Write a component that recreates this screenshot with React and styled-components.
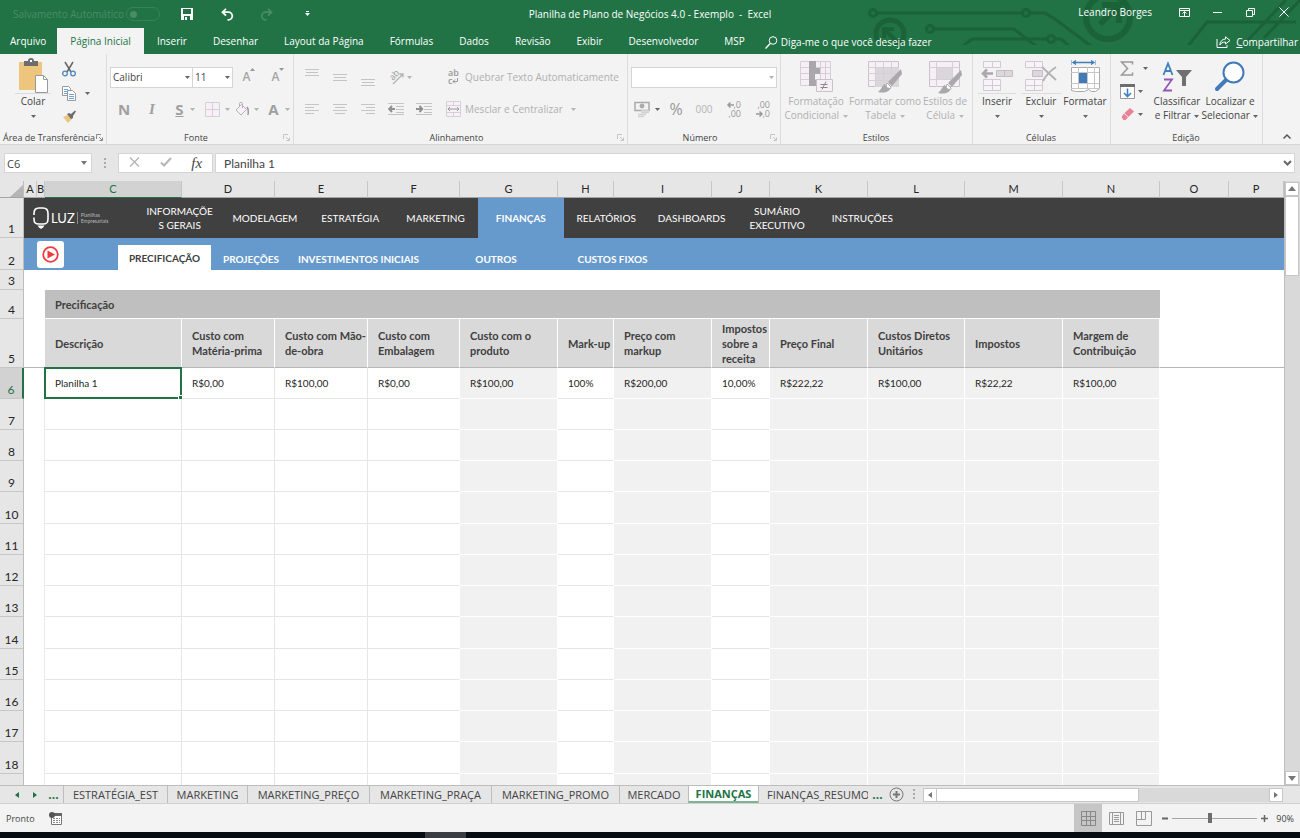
import React from "react";
import styled, { createGlobalStyle, css } from "styled-components";

const ui = `"Open Sans", "Noto Sans", sans-serif`;
const calibri = `Lato, "Open Sans", sans-serif`;

function App() {
    return (
        <>
            <Global />
            <Window>
                <TitleBar />
                <Ribbon />
                <FormulaBar />
                <Workbook />
                <SheetBar />
                <StatusBar />
                <Taskbar>
                    <TaskbarItem />
                </Taskbar>
            </Window>
        </>
    );
}
export default App;

/* ---------- title bar + menu ---------- */

const MENU = [
    "Inserir",
    "Desenhar",
    "Layout da Página",
    "Fórmulas",
    "Dados",
    "Revisão",
    "Exibir",
    "Desenvolvedor",
    "MSP",
];

function TitleBar() {
    return (
        <Header>
            <Circuit />
            <TitleRow>
                <QuickAccess>
                    <AutoSave>
                        Salvamento Automático
                        <Toggle type="checkbox" disabled />
                    </AutoSave>
                    <QuickBtn aria-label="Salvar">
                        <svg width="12" height="12" viewBox="0 0 12 12">
                            <path d="M0 0h12v12H0z" fill="#fff" />
                            <path d="M2 1h8v5H2zM3 8h6v4H3z" fill="#217346" />
                            <path d="M4 9h2v3H4z" fill="#fff" />
                        </svg>
                    </QuickBtn>
                    <QuickBtn aria-label="Desfazer">
                        <UndoIcon color="#fff" />
                    </QuickBtn>
                    <QuickBtn aria-label="Refazer" $flip>
                        <UndoIcon color="#4a8c67" />
                    </QuickBtn>
                    <QuickBtn aria-label="Personalizar">
                        <svg width="5" height="6" viewBox="0 0 5 6">
                            <path d="M1 0h3v1H1zM0 2h5L2.500 5z" fill="#fff" />
                        </svg>
                    </QuickBtn>
                </QuickAccess>
                <DocTitle>Planilha de Plano de Negócios 4.0 - Exemplo &nbsp;-&nbsp; Excel</DocTitle>
                <WindowControls>
                    <User>Leandro Borges</User>
                    <WinBtn aria-label="Opções da faixa">
                        <svg width="11" height="9" viewBox="0 0 11 9" fill="none" stroke="#fff">
                            <path d="M.5.5h10v8H.5zM.5 2.500h10M5.500 8V4M3.500 5.500l2-2 2 2" />
                        </svg>
                    </WinBtn>
                    <WinBtn aria-label="Minimizar">
                        <svg width="9" height="9" viewBox="0 0 9 9" stroke="#fff">
                            <path d="M0 4.500h9" />
                        </svg>
                    </WinBtn>
                    <WinBtn aria-label="Restaurar">
                        <svg width="9" height="9" viewBox="0 0 9 9" fill="none" stroke="#fff">
                            <path d="M.5 2.500h6v6h-6zM2.500 2.500v-2h6v6h-2" />
                        </svg>
                    </WinBtn>
                    <WinBtn aria-label="Fechar">
                        <svg width="10" height="10" viewBox="0 0 10 10" stroke="#fff">
                            <path d="M.5.5l9 9M9.500.500l-9 9" />
                        </svg>
                    </WinBtn>
                </WindowControls>
            </TitleRow>
            <MenuRow>
                <MenuTab $first>Arquivo</MenuTab>
                <MenuTab $active>Página Inicial</MenuTab>
                {MENU.map((name) => (
                    <MenuTab key={name}>{name}</MenuTab>
                ))}
                <TellMe>
                    <svg width="13" height="13" viewBox="0 0 13 13" fill="none" stroke="#fff">
                        <circle cx="8" cy="4.500" r="3.800" />
                        <path d="M5.200 7.500L.5 12.500" strokeWidth="1.300" />
                    </svg>
                    Diga-me o que você deseja fazer
                </TellMe>
                <Share>
                    <svg width="15" height="12" viewBox="0 0 15 12" fill="none" stroke="#fff">
                        <path d="M1 3v8.500h10V9M9.500.800l4.500 3.700-4.500 3.500V6C6.500 6 5 7 3.800 9 4 5.500 6 3.200 9.500 3z" />
                    </svg>
                    <span>
                        <u>C</u>ompartilhar
                    </span>
                </Share>
            </MenuRow>
        </Header>
    );
}

function UndoIcon({ color }) {
    return (
        <svg width="13" height="13" viewBox="0 0 13 13" fill="none" stroke={color} strokeWidth="1.800">
            <path d="M5 .8L1.500 4.200 5 7.600M1.500 4.200H7.500a3.800 3.800 0 0 1 0 7.600H6.500" />
        </svg>
    );
}

function Circuit() {
    return (
        <CircuitSvg width="436" height="45" viewBox="864 0 436 45" fill="none" stroke="#1b6239" strokeWidth="3">
            <circle cx="873" cy="13" r="3.500" />
            <path d="M877 13h145" />
            <circle cx="1026" cy="13" r="3.500" />
            <path d="M1030 13h15l10 6 36 27" />
            <circle cx="890" cy="34" r="14" strokeWidth="5" />
            <path d="M884 38V29h10M884 29l14 14" strokeWidth="4" />
            <circle cx="930" cy="29" r="3.500" />
            <path d="M934 29h80l22 17" />
            <path d="M963 46l9-7h75" />
            <circle cx="1051" cy="39" r="3.500" />
            <path d="M1055 39h6l8 7" />
            <circle cx="1108" cy="17" r="22" strokeWidth="6" />
            <path d="M1102 5h17v18M1118 6l-18 18" strokeWidth="6" />
            <path d="M1188 46l19-24h89" />
            <path d="M1248 40l38-40M1264 38l36-38" />
        </CircuitSvg>
    );
}

/* ---------- ribbon ---------- */

const grey = "#b4b2b4";
const pale = "#d6cfd6";

function Caret({ color = "#666" }) {
    return (
        <svg width="5" height="3" viewBox="0 0 5 3">
            <path d="M0 0h5L2.500 3z" fill={color} />
        </svg>
    );
}

function Group({ name, width, launcher, dim, children }) {
    return (
        <GroupBox $w={width}>
            <GroupBody>{children}</GroupBody>
            <GroupName>
                <span>{name}</span>
                {launcher && (
                    <svg width="7" height="7" viewBox="0 0 7 7" fill="none" stroke={dim ? "#c4c4c4" : "#888"}>
                        <path d="M.5 5V.5H5M3 3l3 3M6.500 3.500v3h-3" />
                    </svg>
                )}
            </GroupName>
        </GroupBox>
    );
}

function Big({ width, icon, lines, dim, split }) {
    const color = dim ? "#b8b8b8" : "#666";
    return (
        <BigBtn $w={width} $dim={dim}>
            <BigIcon $line={split}>{icon}</BigIcon>
            <span>{lines[0]}</span>
            <span>
                {lines[1]} <Caret color={color} />
            </span>
        </BigBtn>
    );
}

function Lines({ y, xs }) {
    return (
        <svg width="14" height="20" viewBox="0 0 14 20" stroke="#c4c4c4">
            {xs.map(([a, b], i) => (
                <path key={i} d={`M${a} ${y + i * 3 + 0.5}H${b}`} />
            ))}
        </svg>
    );
}

function Indent({ left }) {
    return (
        <svg width="16" height="12" viewBox="0 0 16 12" stroke="#c4c4c4" fill="none">
            <path d="M0 .5h16M8 3.500h8M8 6.500h8M8 9.500h8M0 11.500h16" />
            <path
                d={left ? "M7 6H1.500M4 3L1.200 6 4 9" : "M0 6h5.500M3.500 3L6.200 6 3.500 9"}
                stroke="#909090"
                strokeWidth="2"
            />
        </svg>
    );
}

function Brush({ x, y }) {
    return (
        <g transform={`translate(${x} ${y})`}>
            <path d="M24 0L11 13l4 4L25 5z" fill="#aaa8aa" />
            <path d="M10 14l4 4c0 2-2 3-4 3-1-3-1-5 0-7z" fill="#fff" stroke="#aaa" />
            <path d="M8 15c-3 1-3 5-7 8 5 1 11 1 12-4-2 0-4-1-5-4z" fill="#aaa8aa" />
        </g>
    );
}

const pasteIcon = (
    <svg width="30" height="34" viewBox="0 0 30 34">
        <path d="M1 3h23v28H1z" fill="#edc57c" />
        <path d="M6 2h4a3 3 0 0 1 6 0h4v5H6z" fill="#6d6d6d" />
        <path d="M12 1h2v2h-2z" fill="#fff" />
        <path d="M17.500 16.500h8l4 4v13h-12z" fill="#fff" stroke="#999" />
        <path d="M25.500 16.500v4h4" fill="none" stroke="#999" />
    </svg>
);

const condIcon = (
    <svg width="34" height="33" viewBox="0 0 34 33">
        <path d="M1.500 1.500h30v24h-30z" fill="#f6f0f6" stroke={pale} />
        <path d="M1 7.500h31M1 13.500h31M1 19.500h31M21.500 1v25M26.500 1v25" stroke={pale} />
        <path d="M10 1h7v7h4v6h-5v6h1v6h-7z" fill="#a9a7a9" />
        <path d="M17.500 19.500h16v12h-16z" fill="#f6f0f6" stroke="#c9c3c9" />
        <path d="M21.500 24.500h7M21.500 27.500h7M27 21.500l-4 8" stroke="#8a8a8a" />
    </svg>
);

const tableIcon = (
    <svg width="36" height="33" viewBox="0 0 36 33">
        <path d="M1.500 1.500h30v25h-30z" fill="#f6f0f6" stroke="#c9c3c9" />
        <path d="M9 8h23v19H9z" fill="#dad6da" />
        <path d="M1 7.500h31M1 13.500h31M1 20.500h31M8.500 1v26M16.500 1v26M24.500 1v26" stroke={pale} />
        <Brush x={10} y={9} />
    </svg>
);

const cellIcon = (
    <svg width="34" height="34" viewBox="0 0 34 34">
        <path d="M1.500 1.500h30v25h-30z" fill="#f6f0f6" stroke="#c9c3c9" />
        <path d="M1 7.500h31M1 19.500h31M8.500 1v26M24.500 1v26" stroke={pale} />
        <path d="M9 8h15v11H9z" fill="#dad6da" />
        <Brush x={9} y={10} />
    </svg>
);

const insertIcon = (
    <svg width="32" height="32" viewBox="0 0 32 32" fill="#f8f3f8" stroke="#d3c9d3">
        <path d="M2.500 1.500h17v6h-17zM11.500 1v7M2.500 19.500h17v11h-17zM2 25.500h18M11.500 19v12" />
        <path d="M15.500 10.500h16v6h-16zM23.500 10v7" fill="#dcd7dc" stroke="#c4bec4" />
        <path d="M12 13.500H2M6 9.500l-4 4 4 4" fill="none" stroke="#aaa8aa" strokeWidth="2.500" />
    </svg>
);

const deleteIcon = (
    <svg width="34" height="32" viewBox="0 0 34 32" fill="#f8f3f8" stroke="#d3c9d3">
        <path d="M1.500 1.500h17v6h-17zM10.500 1v7M1.500 19.500h17v11h-17zM1 25.500h18M10.500 19v12" />
        <path d="M8.500 10.500h10v6h-10z" fill="#dcd7dc" stroke="#c4bec4" />
        <path d="M18 7l14 13M32 7C26 11 22 15 19 21" fill="none" stroke="#b4b2b4" strokeWidth="2" />
    </svg>
);

const formatIcon = (
    <svg width="30" height="33" viewBox="0 0 30 33" fill="none">
        <path d="M1.500 0v5M25.500 0v5" stroke="#9dbdda" />
        <path d="M4 2.500h19M6 .5l-3 2 3 2M21 .5l3 2-3 2" stroke="#3e7cb8" strokeWidth="1.300" />
        <path d="M1.500 7.500h28v21l-4 3h-4l-3-2-4 2h-9l-4-1z" fill="#fff" stroke="#aaa" />
        <path d="M8.500 7v22M17.500 7v21M24.500 7v22M1 12.500h28M1 23.500h28M1 28.500h28" stroke="#c6c6c6" />
        <path d="M9 13h8v10H9z" fill="#4279b8" />
    </svg>
);

const sortIcon = (
    <svg width="30" height="30" viewBox="0 0 30 30" fill="none">
        <path d="M1.500 13L6 1.500 10.500 13M3 9h6" stroke="#3f7fbf" strokeWidth="1.800" />
        <path d="M2 17.500h8L2 28.500h8" stroke="#9259b5" strokeWidth="1.800" />
        <path d="M14 8h16l-6 7v9h-4v-9z" fill="#707070" />
    </svg>
);

const findIcon = (
    <svg width="30" height="31" viewBox="0 0 30 31">
        <path d="M11 19L2 28" stroke="#4279b8" strokeWidth="4" strokeLinecap="round" />
        <circle cx="18.500" cy="11.500" r="10" fill="#fff" stroke="#4279b8" strokeWidth="2" />
    </svg>
);

function Ribbon() {
    return (
        <RibbonBar>
            <Group name="Área de Transferência" width={107} launcher>
                <Spacer $w={9} />
                <Big width={48} icon={pasteIcon} lines={["Colar", ""]} split />
                <ClipTools>
                    <ToolBtn aria-label="Recortar">
                        <svg width="14" height="15" viewBox="0 0 14 15" fill="none">
                            <path d="M3 0l6 10M11 0L5 10" stroke="#666" strokeWidth="1.500" />
                            <circle cx="3" cy="11.500" r="2.300" stroke="#4d88bf" strokeWidth="1.300" />
                            <circle cx="11" cy="11.500" r="2.300" stroke="#4d88bf" strokeWidth="1.300" />
                        </svg>
                    </ToolBtn>
                    <ToolBtn aria-label="Copiar" $gap={9}>
                        <svg width="14" height="15" viewBox="0 0 14 15" fill="#fff" stroke="#9a9a9a">
                            <path d="M.5.5h6l2 2v7h-8z" />
                            <path d="M2 3.500h4M2 5.500h3M2 7.500h3" stroke="#6ba3d6" />
                            <path d="M5.500 4.500h5l3 3v7h-8z" />
                            <path d="M7 8.500h5M7 10.500h5M7 12.500h5" stroke="#6ba3d6" />
                        </svg>
                        <Caret />
                    </ToolBtn>
                    <ToolBtn aria-label="Pincel">
                        <svg width="14" height="13" viewBox="0 0 14 13">
                            <path d="M1 7l5-2 4 4-4 4z" fill="#edc57c" />
                            <path d="M5 4l2-1 2 1 4-3.500 1 1L11 6l0 2-2 1z" fill="#6d6d6d" />
                        </svg>
                    </ToolBtn>
                </ClipTools>
            </Group>

            <Group name="Fonte" width={187} launcher dim>
                <Tools $pad={3}>
                    <ToolRow>
                        <SelectBox $w={83}>
                            <select aria-label="Fonte">
                                <option>Calibri</option>
                            </select>
                            <Caret />
                        </SelectBox>
                        <SelectBox $w={40}>
                            <select aria-label="Tamanho">
                                <option>11</option>
                            </select>
                            <Caret />
                        </SelectBox>
                        <SizeBtn aria-label="Aumentar fonte">
                            A
                            <svg width="5" height="3" viewBox="0 0 5 3">
                                <path d="M0 3h5L2.500 0z" fill="#999" />
                            </svg>
                        </SizeBtn>
                        <SizeBtn aria-label="Diminuir fonte">
                            A
                            <Caret color="#999" />
                        </SizeBtn>
                    </ToolRow>
                    <ToolRow>
                        <Letter $w={28}>N</Letter>
                        <Letter $w={28} $italic>
                            I
                        </Letter>
                        <Letter $w={38}>
                            <u>S</u>
                            <Caret color={grey} />
                        </Letter>
                        <ToolBtn $w={26} $gap={5} aria-label="Bordas">
                            <svg width="15" height="15" viewBox="0 0 15 15" fill="#f8f0f8" stroke={pale}>
                                <path d="M.5.5h14v14H.5zM7.500 0v15M0 7.500h15" />
                            </svg>
                            <Caret color={grey} />
                        </ToolBtn>
                        <ToolBtn $w={34} $gap={5} aria-label="Preenchimento">
                            <svg width="14" height="14" viewBox="0 0 14 14" fill="#f8f0f8" stroke={grey}>
                                <path d="M1 8l5.500-5.500 5 5L6 13zM4.500 4V1.500C4.500 0 7.500 0 7.500 1.500V6" />
                                <path d="M12 5c1.500 2 1.500 5 1 8" fill="none" stroke="#999" strokeWidth="1.500" />
                            </svg>
                            <Caret color={grey} />
                        </ToolBtn>
                        <Letter $w={30}>
                            A
                            <Caret color={grey} />
                        </Letter>
                    </ToolRow>
                </Tools>
            </Group>

            <Group name="Alinhamento" width={334} launcher dim>
                <Tools $pad={4} $w={145}>
                    <ToolRow>
                        <ToolBtn $w={28} aria-label="Alinhar em cima">
                            <Lines y={2} xs={[[0, 14], [1, 13], [0, 14]]} />
                        </ToolBtn>
                        <ToolBtn $w={28} aria-label="Alinhar no meio">
                            <Lines y={7} xs={[[0, 14], [1, 13], [0, 14]]} />
                        </ToolBtn>
                        <ToolBtn $w={28} aria-label="Alinhar embaixo">
                            <Lines y={12} xs={[[0, 14], [1, 13], [0, 14]]} />
                        </ToolBtn>
                        <ToolBtn $w={36} $gap={2} aria-label="Orientação">
                            <svg width="17" height="16" viewBox="0 0 17 16" fill="none" stroke="#999">
                                <path d="M5 15L15 5M11.500 5H15v3.500" stroke={grey} strokeWidth="1.300" />
                                <text x="0" y="0" transform="translate(5 12) rotate(-48)" stroke="none" fill="#999" fontSize="9" fontFamily={ui}>
                                    ab
                                </text>
                            </svg>
                            <Caret color={grey} />
                        </ToolBtn>
                    </ToolRow>
                    <ToolRow>
                        <ToolBtn $w={28} aria-label="À esquerda">
                            <Lines y={5} xs={[[0, 14], [0, 9], [0, 14], [0, 9]]} />
                        </ToolBtn>
                        <ToolBtn $w={28} aria-label="Centralizar">
                            <Lines y={5} xs={[[0, 14], [2, 12], [0, 14], [2, 12]]} />
                        </ToolBtn>
                        <ToolBtn $w={28} aria-label="À direita">
                            <Lines y={5} xs={[[0, 14], [5, 14], [0, 14], [5, 14]]} />
                        </ToolBtn>
                        <ToolBtn $w={28} aria-label="Diminuir recuo">
                            <Indent left />
                        </ToolBtn>
                        <ToolBtn $w={28} aria-label="Aumentar recuo">
                            <Indent />
                        </ToolBtn>
                    </ToolRow>
                </Tools>
                <Tools $pad={7}>
                    <ToolRow>
                        <TextBtn>
                            <WrapIcon>
                                <span>ab</span>
                                <span>
                                    c
                                    <svg width="6" height="6" viewBox="0 0 6 6" fill="none" stroke="#999">
                                        <path d="M5.500 0v3.500H1M3 1.500l-2 2 2 2" />
                                    </svg>
                                </span>
                            </WrapIcon>
                            Quebrar Texto Automaticamente
                        </TextBtn>
                    </ToolRow>
                    <ToolRow>
                        <TextBtn>
                            <svg width="15" height="16" viewBox="0 0 15 16" fill="#f8f0f8" stroke={pale}>
                                <path d="M.5.5h14v15H.5zM0 4.500h15M0 11.500h15M7.500 0v4M7.500 12v4" />
                                <path d="M2 8h11M4 6L2 8l2 2M11 6l2 2-2 2" fill="none" stroke="#999" />
                            </svg>
                            Mesclar e Centralizar
                            <Caret color={grey} />
                        </TextBtn>
                    </ToolRow>
                </Tools>
            </Group>

            <Group name="Número" width={153} launcher dim>
                <Tools $pad={3}>
                    <ToolRow>
                        <SelectBox $w={146}>
                            <select aria-label="Formato de número">
                                <option> </option>
                            </select>
                            <Caret color={grey} />
                        </SelectBox>
                    </ToolRow>
                    <ToolRow>
                        <ToolBtn $w={31} $gap={5} aria-label="Contabilização">
                            <svg width="16" height="16" viewBox="0 0 16 16" fill="none" stroke="#aaa">
                                <path d="M1 1.500h14v8H1z" strokeWidth="1.500" />
                                <circle cx="8" cy="5" r="2" fill="#aaa" />
                                <path d="M7 9.500h8M7 11.500h8M4 13.500h8M4 15.500h6" stroke="#d2d2d2" strokeWidth="1.500" />
                            </svg>
                            <Caret />
                        </ToolBtn>
                        <NumBtn $size={16}>%</NumBtn>
                        <NumBtn $size={10} $light>
                            000
                        </NumBtn>
                        <Decimals>
                            <span>
                                <SmallArrow left />
                                ,0
                            </span>
                            <span>,00</span>
                        </Decimals>
                        <Decimals>
                            <span>,00</span>
                            <span>
                                <SmallArrow />
                                ,0
                            </span>
                        </Decimals>
                    </ToolRow>
                </Tools>
            </Group>

            <Group name="Estilos" width={192}>
                <Big width={70} icon={condIcon} lines={["Formatação", "Condicional"]} dim />
                <Big width={68} icon={tableIcon} lines={["Formatar como", "Tabela"]} dim />
                <Big width={52} icon={cellIcon} lines={["Estilos de", "Célula"]} dim />
            </Group>

            <Group name="Células" width={138}>
                <Spacer $w={2} />
                <Big width={44} icon={insertIcon} lines={["Inserir", ""]} split />
                <Big width={44} icon={deleteIcon} lines={["Excluir", ""]} split />
                <Big width={44} icon={formatIcon} lines={["Formatar", ""]} />
            </Group>

            <Group name="Edição" width={152}>
                <EditTools>
                    <ToolBtn $gap={9} aria-label="AutoSoma">
                        <svg width="14" height="15" viewBox="0 0 14 15" fill="none" stroke="#999" strokeWidth="1.500">
                            <path d="M12.500 3.500V1H1.500l6 6.500-6 6.500h11v-2.500" />
                        </svg>
                        <Caret />
                    </ToolBtn>
                    <ToolBtn $gap={3} aria-label="Preencher">
                        <svg width="15" height="15" viewBox="0 0 15 15" fill="none">
                            <path d="M.5 1.500h14v13H.5z" fill="#fff" stroke="#999" />
                            <path d="M0 0h15v3H0z" fill="#6d6d6d" />
                            <path d="M7.500 4.500v8M4 9l3.500 3.500L11 9" stroke="#3f7fbf" strokeWidth="1.600" />
                        </svg>
                        <Caret />
                    </ToolBtn>
                    <ToolBtn $gap={3} aria-label="Limpar">
                        <svg width="15" height="14" viewBox="0 0 15 14">
                            <path d="M10 1l4 3.500-5.500 5.500-4-4z" fill="#ea8296" />
                            <path d="M4 6.500l4 4-2.500 2.500H3.500L1.500 10z" fill="#ea8296" />
                        </svg>
                        <Caret />
                    </ToolBtn>
                </EditTools>
                <Big width={52} icon={sortIcon} lines={["Classificar", "e Filtrar"]} />
                <Big width={54} icon={findIcon} lines={["Localizar e", "Selecionar"]} />
            </Group>

            <Collapse aria-label="Recolher faixa">
                <svg width="8" height="5" viewBox="0 0 8 5" fill="none" stroke="#555" strokeWidth="1.500">
                    <path d="M.5 4.500L4 1l3.500 3.500" />
                </svg>
            </Collapse>
        </RibbonBar>
    );
}

function SmallArrow({ left }) {
    return (
        <svg width="7" height="6" viewBox="0 0 7 6" fill="none" stroke="#999" strokeWidth="1.500">
            <path d={left ? "M7 3H1M3.500.5L1 3l2.500 2.500" : "M0 3h6M3.500.5L6 3 3.500 5.500"} />
        </svg>
    );
}

/* ---------- formula bar ---------- */

function Dots() {
    return (
        <svg width="2" height="11" viewBox="0 0 2 11" fill="#aaa">
            <path d="M0 0h2v2H0zM0 4h2v2H0zM0 8h2v2H0z" />
        </svg>
    );
}

function FormulaBar() {
    return (
        <Formula>
            <NameBox>
                <input aria-label="Caixa de nome" defaultValue="C6" />
                <svg width="6" height="4" viewBox="0 0 6 4">
                    <path d="M0 0h6L3 4z" fill="#777" />
                </svg>
            </NameBox>
            <Dots />
            <FormulaBtns>
                <button aria-label="Cancelar">
                    <svg width="11" height="10" viewBox="0 0 11 10" stroke="#b5b5b5" strokeWidth="1.400">
                        <path d="M1 .5l9 9M10 .5l-9 9" />
                    </svg>
                </button>
                <button aria-label="Inserir">
                    <svg width="12" height="10" viewBox="0 0 12 10" fill="none" stroke="#b5b5b5" strokeWidth="2">
                        <path d="M1 5.500l3 3L11 1" />
                    </svg>
                </button>
                <button>
                    <Fx>fx</Fx>
                </button>
            </FormulaBtns>
            <FormulaInput>
                <input aria-label="Barra de fórmulas" defaultValue="Planilha 1" />
                <svg width="9" height="6" viewBox="0 0 9 6" fill="none" stroke="#666" strokeWidth="2">
                    <path d="M1 1l3.500 3.500L8 1" />
                </svg>
            </FormulaInput>
        </Formula>
    );
}

/* ---------- sheet ---------- */

const COLS = [
    ["A", 13],
    ["B", 8],
    ["C", 137],
    ["D", 93],
    ["E", 93],
    ["F", 92],
    ["G", 98],
    ["H", 56],
    ["I", 98],
    ["J", 58],
    ["K", 98],
    ["L", 97],
    ["M", 98],
    ["N", 97],
    ["O", 69],
    ["P", null],
];

const NAV = [
    "INFORMAÇÕE S GERAIS",
    "MODELAGEM",
    "ESTRATÉGIA",
    "MARKETING",
    "FINANÇAS",
    "RELATÓRIOS",
    "DASHBOARDS",
    "SUMÁRIO EXECUTIVO",
    "INSTRUÇÕES",
];

const SUBNAV = ["PRECIFICAÇÃO", "PROJEÇÕES", "INVESTIMENTOS INICIAIS", "OUTROS", "CUSTOS FIXOS"];

const FIELDS = [
    { title: "Descrição", value: "Planilha 1" },
    { title: "Custo com Matéria-prima", value: "R$0,00" },
    { title: "Custo com Mão-de-obra", value: "R$100,00" },
    { title: "Custo com Embalagem", value: "R$0,00", last: true },
    { title: "Custo com o produto", value: "R$100,00", calc: true },
    { title: "Mark-up", value: "100%", last: true },
    { title: "Preço com markup", value: "R$200,00", calc: true },
    { title: "Impostos sobre a receita", value: "10,00%", last: true },
    { title: "Preço Final", value: "R$222,22", calc: true },
    { title: "Custos Diretos Unitários", value: "R$100,00", calc: true },
    { title: "Impostos", value: "R$22,22", calc: true },
    { title: "Margem de Contribuição", value: "R$100,00", calc: true },
];

const EMPTY_ROWS = [7, 8, 9, 10, 11, 12, 13, 14, 15, 16, 17, 18, 19];

function Workbook() {
    return (
        <Work>
            <SheetArea>
                <Sheet>
                    <colgroup>
                        <Col $w={24} />
                        {COLS.map(([name, w]) => (
                            <Col key={name} $w={w} />
                        ))}
                    </colgroup>
                    <thead>
                        <tr>
                            <Corner>
                                <svg width="13" height="12" viewBox="0 0 13 12">
                                    <path d="M13 0v12H0z" fill="#b5b5b5" />
                                </svg>
                            </Corner>
                            {COLS.map(([name]) => (
                                <ColHead key={name} scope="col" $active={name === "C"}>
                                    {name}
                                </ColHead>
                            ))}
                        </tr>
                    </thead>
                    <tbody>
                        <tr>
                            <RowHead $h={40}>1</RowHead>
                            <DarkCell colSpan={16}>
                                <SiteNav>
                                    <Logo />
                                    <NavGrid>
                                        {NAV.map((name) => (
                                            <NavLink key={name} href="#" $active={name === "FINANÇAS"}>
                                                {name}
                                            </NavLink>
                                        ))}
                                    </NavGrid>
                                </SiteNav>
                            </DarkCell>
                        </tr>
                        <tr>
                            <RowHead $h={32}>2</RowHead>
                            <BlueCell colSpan={16}>
                                <SubNav>
                                    <PlayBtn aria-label="Vídeo">
                                        <svg width="17" height="17" viewBox="0 0 17 17">
                                            <circle cx="8.500" cy="8.500" r="7.300" fill="none" stroke="#ee3a3f" strokeWidth="1.800" />
                                            <path d="M5.500 4.500l7.500 4-7.500 4z" fill="#ee3a3f" />
                                        </svg>
                                    </PlayBtn>
                                    {SUBNAV.map((name, i) => (
                                        <SubLink key={name} href="#" $active={i === 0}>
                                            {name}
                                        </SubLink>
                                    ))}
                                </SubNav>
                            </BlueCell>
                        </tr>
                        <tr>
                            <RowHead $h={20}>3</RowHead>
                            <td colSpan={16} />
                        </tr>
                        <tr>
                            <RowHead $h={29}>4</RowHead>
                            <td colSpan={2} />
                            <SectionCell colSpan={12}>Precificação</SectionCell>
                            <td colSpan={2} />
                        </tr>
                        <tr>
                            <RowHead $h={49}>5</RowHead>
                            <Frozen colSpan={2} />
                            {FIELDS.map((f) => (
                                <FieldHead key={f.title} scope="col">
                                    {f.title}
                                </FieldHead>
                            ))}
                            <Frozen colSpan={2} />
                        </tr>
                        <tr>
                            <RowHead $h={31} $active>
                                6
                            </RowHead>
                            <Blank colSpan={2} />
                            {FIELDS.map((f, i) => (
                                <Cell key={f.title} $calc={f.calc} $last={f.last} $selected={i === 0}>
                                    {f.value}
                                </Cell>
                            ))}
                            <td colSpan={2} />
                        </tr>
                        {EMPTY_ROWS.map((n) => (
                            <tr key={n}>
                                <RowHead $h={n % 4 === 2 ? 32 : 31}>{n}</RowHead>
                                <Blank colSpan={2} />
                                {FIELDS.map((f) => (
                                    <Cell key={f.title} $calc={f.calc} $last={f.last} />
                                ))}
                                <td colSpan={2} />
                            </tr>
                        ))}
                    </tbody>
                </Sheet>
            </SheetArea>
            <VScroll>
                <ScrollBtn aria-label="Acima">
                    <Triangle d="M0 5h8L4 0z" />
                </ScrollBtn>
                <VThumb />
                <ScrollBtn aria-label="Abaixo">
                    <Triangle d="M0 1h8L4 6z" />
                </ScrollBtn>
            </VScroll>
        </Work>
    );
}

function Triangle({ d, color = "#777" }) {
    return (
        <svg width="8" height="6" viewBox="0 0 8 6">
            <path d={d} fill={color} />
        </svg>
    );
}

function Logo() {
    return (
        <LogoBox>
            <svg width="16" height="22" viewBox="0 0 16 22" fill="none" stroke="#fff" strokeWidth="1.600">
                <path d="M1 8V6.500C1 2.500 2.500 1 6 1h4c3.500 0 5 1.500 5 5.500V12c0 4-1.500 5-5 5H6c-3.500 0-5-1-5-5v-1.500" />
                <path d="M4.500 18.500h7l-1.500 2-2 1.500-2-1.500z" fill="#fff" stroke="none" />
            </svg>
            <strong>LUZ</strong>
            <small>
                Planilhas
                <br />
                Empresariais
            </small>
        </LogoBox>
    );
}

/* ---------- bottom bars ---------- */

const TABS = [
    ["ESTRATÉGIA_EST", 104],
    ["MARKETING", 80],
    ["MARKETING_PREÇO", 122],
    ["MARKETING_PRAÇA", 122],
    ["MARKETING_PROMO", 128],
    ["MERCADO", 69],
    ["FINANÇAS", 70],
    ["FINANÇAS_RESUMO", 110],
];

function SheetBar() {
    return (
        <Sheets>
            <ArrowBtn aria-label="Anterior">
                <svg width="4" height="6" viewBox="0 0 4 6">
                    <path d="M4 0v6L0 3z" fill="#217346" />
                </svg>
            </ArrowBtn>
            <ArrowBtn aria-label="Próxima">
                <svg width="4" height="6" viewBox="0 0 4 6">
                    <path d="M0 0v6l4-3z" fill="#217346" />
                </svg>
            </ArrowBtn>
            <More>...</More>
            {TABS.map(([name, w]) => (
                <SheetTab key={name} $w={w} $active={name === "FINANÇAS"} $cut={name === "FINANÇAS_RESUMO"}>
                    {name}
                </SheetTab>
            ))}
            <More>...</More>
            <AddBtn aria-label="Nova planilha">
                <svg width="15" height="15" viewBox="0 0 15 15" fill="none" stroke="#777">
                    <circle cx="7.500" cy="7.500" r="6.500" />
                    <path d="M7.500 4v7M4 7.500h7" strokeWidth="2" />
                </svg>
            </AddBtn>
            <Dots />
            <HScroll>
                <ScrollBtn aria-label="Esquerda">
                    <Triangle d="M6 0v6L2 3z" />
                </ScrollBtn>
                <HThumb />
                <ScrollBtn aria-label="Direita">
                    <Triangle d="M2 0v6l4-3z" />
                </ScrollBtn>
            </HScroll>
        </Sheets>
    );
}

function StatusBar() {
    return (
        <Status>
            <Ready>Pronto</Ready>
            <svg width="13" height="13" viewBox="0 0 13 13">
                <path d="M2.500 2.500h10v10h-10z" fill="#fff" stroke="#777" />
                <path d="M2 1h11v3H2z" fill="#666" />
                <path d="M4 6.500h7M4 8.500h7M4 10.500h7" stroke="#888" strokeDasharray="2 1" />
                <circle cx="3" cy="3" r="3" fill="#555" />
            </svg>
            <ViewBtns>
                <ViewBtn aria-label="Normal" $active>
                    <svg width="15" height="15" viewBox="0 0 15 15" fill="none" stroke="#888">
                        <path d="M.5.5h14v14H.5zM5.500 0v15M9.500 0v15M0 5.500h15M0 9.500h15" />
                    </svg>
                </ViewBtn>
                <ViewBtn aria-label="Layout da página">
                    <svg width="15" height="13" viewBox="0 0 15 13" fill="none" stroke="#999">
                        <path d="M.5.5h14v12H.5zM3.500 1v11.500M11.500 1v11.500M5 3.500h5M5 5.500h5M5 7.500h5M5 9.500h5" />
                    </svg>
                </ViewBtn>
                <ViewBtn aria-label="Quebra de página">
                    <svg width="16" height="15" viewBox="0 0 16 15" fill="none" stroke="#999">
                        <path d="M.5.5h15v14H.5zM.5 8.500h9V.5M5.500.500v8" />
                    </svg>
                </ViewBtn>
            </ViewBtns>
            <ZoomBtn aria-label="Menos zoom">
                <svg width="7" height="7" viewBox="0 0 7 7">
                    <path d="M0 3.500h6" stroke="#666" strokeWidth="2" />
                </svg>
            </ZoomBtn>
            <ZoomRange type="range" min="0" max="100" defaultValue="45" aria-label="Zoom" />
            <ZoomBtn aria-label="Mais zoom">
                <svg width="7" height="7" viewBox="0 0 7 7">
                    <path d="M0 3.500h7M3.500 0v7" stroke="#666" strokeWidth="1.500" />
                </svg>
            </ZoomBtn>
            <Percent>90%</Percent>
        </Status>
    );
}

/* ---------- styles ---------- */

const Global = createGlobalStyle`
    * {
        box-sizing: border-box;
    }
    body {
        margin: 0;
        font-family: ${ui};
        font-size: 10px;
        color: #444;
        overflow: hidden;
    }
    button, input, select {
        font: inherit;
        color: inherit;
        padding: 0;
        margin: 0;
        border: none;
        background: none;
        outline: none;
    }
    svg {
        flex: none;
        overflow: visible;
    }
`;

const Window = styled.div`
    display: flex;
    flex-direction: column;
    height: 100vh;
    background-color: #e6e6e6;
`;

const Header = styled.header`
    position: relative;
    background-color: #217346;
    color: white;
`;

const CircuitSvg = styled.svg`
    position: absolute;
    top: 0;
    right: 0;
    overflow: hidden;
`;

const TitleRow = styled.div`
    position: relative;
    display: grid;
    grid-template-columns: 1fr auto 1fr;
    align-items: center;
    height: 28px;
`;

const QuickAccess = styled.div`
    display: flex;
    align-items: center;
    padding-left: 13px;
`;

const AutoSave = styled.label`
    display: flex;
    align-items: center;
    justify-content: space-between;
    width: 147px;
    margin-right: 7px;
    color: #4a8c67;
    white-space: nowrap;
`;

const Toggle = styled.input`
    appearance: none;
    display: flex;
    align-items: center;
    width: 34px;
    height: 14px;
    padding: 0 3px;
    border: 1px solid #3a8159;
    border-radius: 7px;
    &::before {
        content: "";
        width: 7px;
        height: 7px;
        border-radius: 50%;
        background-color: #4a8c67;
    }
`;

const QuickBtn = styled.button`
    display: flex;
    justify-content: center;
    width: 40px;
    ${(p) => p.$flip && "transform: scaleX(-1);"}
`;

const DocTitle = styled.div`
    white-space: nowrap;
`;

const WindowControls = styled.div`
    display: flex;
    align-items: center;
    justify-content: flex-end;
    height: 24px;
    align-self: start;
`;

const User = styled.span`
    margin-right: 16px;
`;

const WinBtn = styled.button`
    display: flex;
    align-items: center;
    justify-content: center;
    width: 33px;
    height: 24px;
`;

const MenuRow = styled.nav`
    position: relative;
    display: flex;
    height: 26px;
`;

const MenuTab = styled.button`
    padding: 0 13px;
    white-space: nowrap;
    ${(p) => p.$first && "padding: 0 11px 0 10px;"}
    ${(p) =>
        p.$active &&
        css`
            background-color: #f3f3f3;
            color: #217346;
        `}
`;

const TellMe = styled.button`
    display: flex;
    align-items: center;
    gap: 3px;
    margin-left: 7px;
    padding-top: 2px;
    white-space: nowrap;
`;

const Share = styled.button`
    display: flex;
    align-items: center;
    gap: 5px;
    margin-left: auto;
    padding: 2px 2px 0 0;
`;

const RibbonBar = styled.section`
    display: flex;
    height: 91px;
    background-color: #f3f3f3;
    border-bottom: 1px solid #d6d6d6;
`;

const GroupBox = styled.div`
    display: flex;
    flex-direction: column;
    flex: none;
    width: ${(p) => p.$w}px;
    border-right: 1px solid #dcdcdc;
`;

const GroupBody = styled.div`
    display: flex;
    flex: 1;
`;

const GroupName = styled.div`
    display: flex;
    align-items: center;
    height: 14px;
    padding: 0 3px 0 2px;
    font-size: 9px;
    white-space: nowrap;
    span {
        flex: 1;
        text-align: center;
    }
`;

const Spacer = styled.span`
    flex: none;
    width: ${(p) => p.$w}px;
`;

const BigBtn = styled.button`
    display: flex;
    flex-direction: column;
    align-items: center;
    flex: none;
    width: ${(p) => p.$w}px;
    padding-top: 5px;
    line-height: 14px;
    white-space: nowrap;
    color: ${(p) => (p.$dim ? "#b0b0b0" : "#444")};
    span svg {
        vertical-align: middle;
        margin-left: 1px;
    }
`;

const BigIcon = styled.div`
    display: flex;
    align-items: center;
    justify-content: center;
    height: 35px;
    ${(p) => p.$line && "border-bottom: 1px solid #dcdcdc; padding: 0 3px;"}
`;

const ClipTools = styled.div`
    display: flex;
    flex-direction: column;
    align-items: flex-start;
    gap: 9px;
    padding: 8px 0 0 5px;
`;

const EditTools = styled.div`
    display: flex;
    flex-direction: column;
    align-items: flex-start;
    gap: 8px;
    width: 40px;
    padding: 7px 0 0 9px;
`;

const Tools = styled.div`
    display: flex;
    flex-direction: column;
    gap: 12px;
    width: ${(p) => (p.$w ? p.$w + "px" : "auto")};
    padding: 13px 0 0 ${(p) => p.$pad}px;
`;

const ToolRow = styled.div`
    display: flex;
    align-items: center;
    height: 20px;
`;

const ToolBtn = styled.button`
    display: flex;
    align-items: center;
    justify-content: center;
    gap: ${(p) => p.$gap || 0}px;
    flex: none;
    width: ${(p) => (p.$w ? p.$w + "px" : "auto")};
`;

const SelectBox = styled.div`
    display: flex;
    align-items: center;
    width: ${(p) => p.$w}px;
    height: 21px;
    padding: 0 2px;
    border: 1px solid #d5d5d5;
    background-color: white;
    & + & {
        border-left: none;
    }
    select {
        appearance: none;
        flex: 1;
        min-width: 0;
    }
`;

const SizeBtn = styled.button`
    display: flex;
    align-items: flex-start;
    justify-content: center;
    width: 29px;
    padding-left: 3px;
    font-size: 12px;
    font-weight: 600;
    color: #a5a5a5;
    line-height: 18px;
`;

const Letter = styled.button`
    display: flex;
    align-items: center;
    justify-content: center;
    gap: 6px;
    width: ${(p) => p.$w}px;
    font-size: 15px;
    font-weight: bold;
    line-height: 20px;
    color: #a0a0a0;
    ${(p) =>
        p.$italic &&
        css`
            font-family: "Liberation Serif", serif;
            font-style: italic;
        `}
`;

const TextBtn = styled.button`
    display: flex;
    align-items: center;
    gap: 4px;
    color: #b0b0b0;
    white-space: nowrap;
    & > svg:last-child:not(:first-child) {
        margin-left: 4px;
    }
`;

const WrapIcon = styled.span`
    display: flex;
    flex-direction: column;
    width: 15px;
    padding-left: 2px;
    font-size: 9px;
    font-weight: 600;
    line-height: 8px;
    text-align: left;
    color: #999;
`;

const NumBtn = styled.button`
    width: 28px;
    font-size: ${(p) => p.$size}px;
    line-height: 20px;
    color: ${(p) => (p.$light ? "#b5b5b5" : "#999")};
`;

const Decimals = styled.button`
    display: flex;
    flex-direction: column;
    align-items: flex-end;
    width: 29px;
    padding-right: 6px;
    font-size: 9px;
    line-height: 9px;
    color: #999;
`;

const Collapse = styled.button`
    display: flex;
    align-items: flex-end;
    margin-left: auto;
    padding: 0 9px 5px 0;
`;

const Formula = styled.section`
    display: flex;
    align-items: center;
    height: 36px;
    padding: 0 5px 0 4px;
`;

const NameBox = styled.div`
    display: flex;
    align-items: center;
    width: 88px;
    height: 20px;
    margin-right: 12px;
    padding: 0 4px 0 2px;
    border: 1px solid #d5d5d5;
    background-color: white;
    font-size: 11px;
    input {
        flex: 1;
        min-width: 0;
    }
`;

const FormulaBtns = styled.div`
    display: flex;
    justify-content: space-around;
    align-items: center;
    width: 95px;
    height: 20px;
    margin: 0 2px 0 12px;
    border: 1px solid #d5d5d5;
    background-color: white;
`;

const Fx = styled.i`
    font-family: "Liberation Serif", serif;
    font-size: 15px;
    line-height: 16px;
    color: #444;
`;

const FormulaInput = styled.div`
    display: flex;
    align-items: center;
    flex: 1;
    height: 20px;
    padding: 0 2px 0 8px;
    border: 1px solid #d5d5d5;
    background-color: white;
    font-family: ${calibri};
    font-size: 12px;
    input {
        flex: 1;
    }
`;

const Work = styled.main`
    display: flex;
    flex: 1;
    min-height: 0;
    border-bottom: 1px solid #bdbdbd;
`;

const SheetArea = styled.div`
    flex: 1;
    min-width: 0;
    overflow: hidden;
    background-color: white;
    border-right: 1px solid #bdbdbd;
`;

const Sheet = styled.table`
    width: 100%;
    table-layout: fixed;
    border-spacing: 0;
    font-family: ${calibri};
    font-size: 10px;
    color: #262626;
    th, td {
        padding: 0;
    }
`;

const Col = styled.col`
    width: ${(p) => (p.$w ? p.$w + "px" : "auto")};
`;

const Corner = styled.td`
    background-color: #e6e6e6;
    border-right: 1px solid #bdbdbd;
    border-bottom: 1px solid #a5a5a5;
    text-align: right;
    vertical-align: bottom;
    line-height: 0;
`;

const ColHead = styled.th`
    height: 17px;
    background-color: ${(p) => (p.$active ? "#d2d2d2" : "#e6e6e6")};
    border-right: 1px solid #c6c6c6;
    border-bottom: 1px solid ${(p) => (p.$active ? "#217346" : "#a5a5a5")};
    color: ${(p) => (p.$active ? "#217346" : "#262626")};
    font-size: 11px;
    font-weight: normal;
    line-height: 16px;
`;

const RowHead = styled.th.attrs({ scope: "row" })`
    height: ${(p) => p.$h}px;
    background-color: ${(p) => (p.$active ? "#d2d2d2" : "#e6e6e6")};
    border-right: ${(p) => (p.$active ? "2px solid #217346" : "1px solid #bdbdbd")};
    border-bottom: 1px solid #c6c6c6;
    color: ${(p) => (p.$active ? "#217346" : "#262626")};
    font-size: 12px;
    font-weight: normal;
    line-height: 16px;
    vertical-align: bottom;
`;

const DarkCell = styled.td`
    background-color: #404040;
`;

const BlueCell = styled.td`
    background-color: #6699cc;
`;

const SiteNav = styled.nav`
    display: flex;
    height: 40px;
`;

const LogoBox = styled.div`
    display: flex;
    align-items: center;
    gap: 2px;
    width: 113px;
    padding-left: 9px;
    color: white;
    strong {
        font-size: 13px;
        font-weight: normal;
    }
    small {
        padding-left: 3px;
        border-left: 1px solid #888;
        font-size: 5px;
        line-height: 6px;
        color: #bbb;
    }
`;

const NavGrid = styled.div`
    display: grid;
    grid-template-columns: repeat(9, 1fr);
    width: 768px;
`;

const NavLink = styled.a`
    display: flex;
    align-items: center;
    justify-content: center;
    padding: 0 9px;
    color: white;
    text-align: center;
    text-decoration: none;
    line-height: 14px;
    ${(p) =>
        p.$active &&
        css`
            background-color: #6699cc;
            font-weight: bold;
        `}
`;

const SubNav = styled.nav`
    display: grid;
    grid-template-columns: 81px 93px 80px 135px 140px 93px;
    padding-left: 13px;
    height: 32px;
`;

const PlayBtn = styled.button`
    display: flex;
    align-items: center;
    justify-content: center;
    width: 27px;
    height: 27px;
    margin-top: 3px;
    border-radius: 3px;
    background-color: white;
`;

const SubLink = styled.a`
    display: flex;
    align-items: center;
    justify-content: center;
    margin-top: 7px;
    padding-top: 3px;
    color: white;
    font-weight: bold;
    text-decoration: none;
    white-space: nowrap;
    ${(p) =>
        p.$active &&
        css`
            padding-top: 0;
            background-color: white;
            color: #404040;
        `}
`;

const SectionCell = styled.td`
    && {
        padding-left: 10px;
    }
    background-color: #bfbfbf;
    border-bottom: 1px solid white;
    color: #404040;
    font-size: 11px;
    font-weight: bold;
`;

const Frozen = styled.td`
    border-bottom: 1px solid #b5b5b5;
`;

const FieldHead = styled.th`
    && {
        padding-left: 10px;
    }
    background-color: #d9d9d9;
    border-right: 1px solid white;
    border-bottom: 1px solid #b5b5b5;
    color: #404040;
    font-size: 11px;
    line-height: 15px;
    text-align: left;
`;

const Blank = styled.td`
    border-right: 1px solid #e9e9e9;
`;

const Cell = styled.td`
    position: relative;
    && {
        padding-left: 10px;
    }
    border-right: 1px solid ${(p) => (p.$calc || p.$last ? "white" : "#e6e6e6")};
    border-bottom: 1px solid ${(p) => (p.$calc ? "white" : "#e6e6e6")};
    background-color: ${(p) => (p.$calc ? "#f1f1f1" : "white")};
    ${(p) =>
        p.$selected &&
        css`
            &::before {
                content: "";
                position: absolute;
                inset: -1px;
                border: 2px solid #217346;
            }
            &::after {
                content: "";
                position: absolute;
                right: -2px;
                bottom: -2px;
                width: 4px;
                height: 4px;
                background-color: #217346;
                outline: 1px solid white;
            }
        `}
`;

const ScrollBtn = styled.button`
    display: flex;
    align-items: center;
    justify-content: center;
    flex: none;
    width: 14px;
    height: 14px;
    border: 1px solid #c6c6c6;
    background-color: white;
`;

const VScroll = styled.div`
    display: flex;
    flex-direction: column;
    width: 15px;
    padding-top: 1px;
    background-color: #d9d9d9;
`;

const VThumb = styled.div`
    width: 14px;
    height: 80px;
    margin-bottom: auto;
    border: 1px solid #c6c6c6;
    background-color: white;
`;

const Sheets = styled.nav`
    display: flex;
    align-items: center;
    height: 18px;
    border-bottom: 1px solid #d0d0d0;
    padding: 0 17px 0 8px;
`;

const ArrowBtn = styled.button`
    display: flex;
    justify-content: center;
    width: 18px;
`;

const More = styled.button`
    width: 19px;
    color: #217346;
    font-size: 12px;
    font-weight: bold;
    line-height: 12px;
`;

const SheetTab = styled.button`
    flex: none;
    width: ${(p) => p.$w}px;
    height: 17px;
    border-left: 1px solid #bdbdbd;
    font-size: 11px;
    line-height: 16px;
    white-space: nowrap;
    overflow: hidden;
    ${(p) => p.$cut && "padding-left: 8px; text-align: left;"}
    ${(p) =>
        p.$active &&
        css`
            background-color: white;
            border-bottom: 2px solid #7db594;
            color: #217346;
            font-weight: bold;
        `}
`;

const AddBtn = styled.button`
    display: flex;
    justify-content: center;
    width: 18px;
    margin-right: 8px;
`;

const HScroll = styled.div`
    display: flex;
    flex: 1;
    margin-left: 8px;
    background-color: #d9d9d9;
`;

const HThumb = styled.div`
    flex: none;
    width: 56%;
    height: 14px;
    margin-right: auto;
    border: 1px solid #c6c6c6;
    border-left: none;
    background-color: white;
`;

const Status = styled.footer`
    display: flex;
    align-items: center;
    height: 28px;
    padding: 0 6px;
    background-color: #f3f3f3;
`;

const Ready = styled.span`
    width: 43px;
    font-size: 9px;
`;

const ViewBtns = styled.div`
    display: flex;
    margin-left: auto;
`;

const ViewBtn = styled.button`
    display: flex;
    align-items: center;
    justify-content: center;
    width: 28px;
    height: 28px;
    background-color: ${(p) => (p.$active ? "#c6c6c6" : "transparent")};
`;

const ZoomBtn = styled.button`
    display: flex;
    justify-content: center;
    width: 14px;
`;

const ZoomRange = styled.input`
    appearance: none;
    width: 85px;
    height: 11px;
    background: linear-gradient(#a5a5a5, #a5a5a5) center / 100% 1px no-repeat;
    &::-webkit-slider-thumb {
        appearance: none;
        width: 4px;
        height: 10px;
        background-color: #6d6d6d;
    }
`;

const Percent = styled.span`
    width: 23px;
    font-size: 9px;
    text-align: right;
`;

const Taskbar = styled.div`
    display: flex;
    height: 6px;
    background-color: #070b12;
`;

const TaskbarItem = styled.div`
    width: 41px;
    margin-left: 425px;
    background-color: #3a3d42;
`;
